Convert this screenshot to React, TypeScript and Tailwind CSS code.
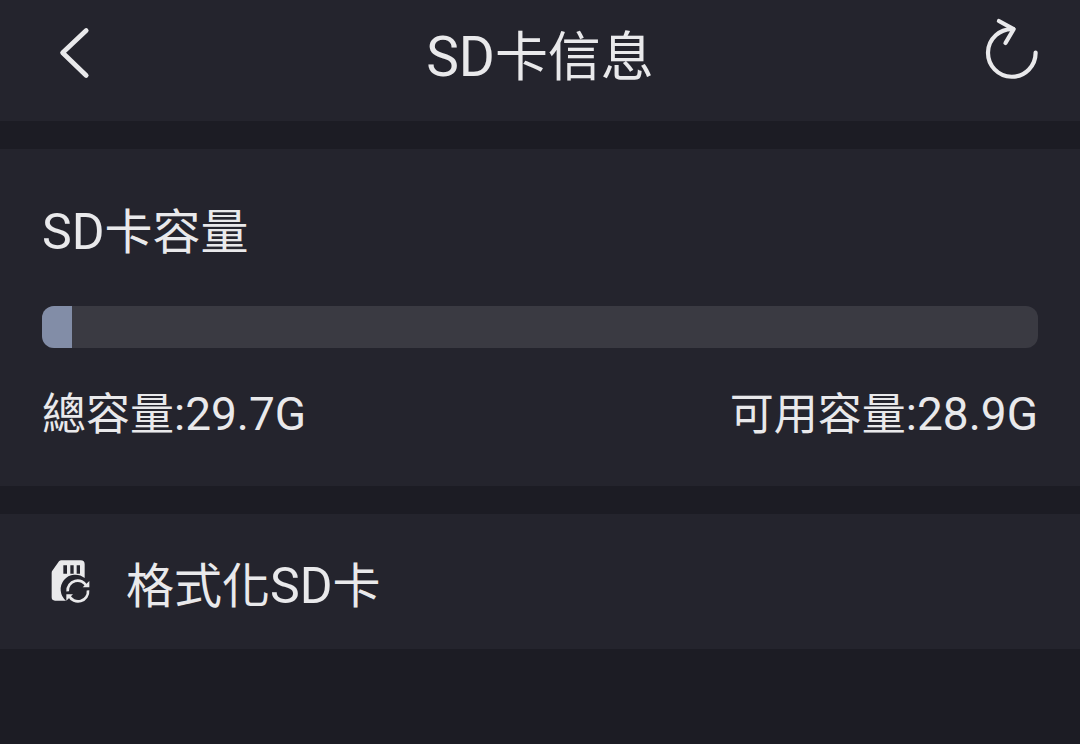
interface IconProps {
  className?: string
}

function BackIcon({ className }: IconProps) {
  return (
    <svg
      className={className}
      viewBox="0 0 36 56"
      fill="none"
      stroke="currentColor"
      strokeWidth="4.8"
      strokeLinecap="round"
      strokeLinejoin="round"
      aria-hidden="true"
    >
      <path d="M30.2 6.6 L6.6 28.7 L30.2 51.4" />
    </svg>
  )
}

function RefreshIcon({ className }: IconProps) {
  return (
    <svg
      className={className}
      viewBox="0 0 56 64"
      fill="none"
      stroke="currentColor"
      strokeWidth="4.2"
      strokeLinecap="round"
      strokeLinejoin="round"
      aria-hidden="true"
    >
      <path d="M51.6 36.5 A23.8 23.8 0 1 1 29.3 13.2" />
      <path d="M14.9 5 L29.6 13.2 L21.5 27" />
    </svg>
  )
}

function FormatCardIcon({ className }: IconProps) {
  return (
    <svg className={className} viewBox="0 0 126 138" fill="none" aria-hidden="true">
      {/* Card body, with a round bite for the arrows */}
      <path
        fill="currentColor"
        d="M34 7 H92 Q104 7 104 19 V60 A43 43 0 0 0 48 128 H15 Q5 128 5 118 V44 Q5 40 8 37 L27 10 Q30 7 34 7 Z"
      />
      <path fill="#24242d" d="M40 22 H51 V47 H40 Z M61 22 H71 V47 H61 Z M80 22 H90 V47 H80 Z" />
      {/* Two arrows chasing each other */}
      <g stroke="currentColor" strokeWidth="8">
        <path d="M53 100 A30 30 0 0 1 110 85" />
        <path d="M114 97 A30 30 0 0 1 57 113" />
      </g>
      <path fill="currentColor" d="M118 69 V88 H98 Z M49 128 V109 H69 Z" />
    </svg>
  )
}

const total = 29.7
const available = 28.9

export default function App() {
  const usedPercent = Math.round(((total - available) / total) * 100)

  return (
    <div className="min-h-screen bg-[#1c1c24] font-['Roboto','Noto_Sans_CJK_TC',sans-serif] text-[#e9e9eb]">
      <header className="flex items-start justify-between bg-[#24242d] px-10 pt-4 pb-[30px]">
        <button type="button" aria-label="返回" className="w-14 pt-2 pl-4">
          <BackIcon className="h-14 w-9" />
        </button>
        <h1 className="pt-[9px] text-[53px] leading-[65px]">
          <span className="text-[55px]">SD</span>卡信息
        </h1>
        <button type="button" aria-label="重新整理">
          <RefreshIcon className="h-16 w-14" />
        </button>
      </header>

      <main className="mt-7 flex flex-col gap-7">
        <section className="bg-[#24242d] px-[42px] pt-14 pb-[46px]">
          <h2 className="h-14 text-[48px] leading-[54px]">
            <span className="text-[50px]">SD</span>卡容量
          </h2>
          <div className="mt-[45px] h-[42px] overflow-hidden rounded-xl bg-[#3a3a42]">
            <div className="h-full bg-[#828da7]" style={{ width: `${usedPercent}%` }} />
          </div>
          <div className="mt-10 flex h-[52px] justify-between text-[44px] leading-[52px]">
            <span>
              總容量<span className="text-[46px]">:{total}G</span>
            </span>
            <span>
              可用容量<span className="text-[46px]">:{available}G</span>
            </span>
          </div>
        </section>

        <button type="button" className="flex w-full items-start bg-[#24242d] px-[50px] pt-11 pb-9 text-left">
          <FormatCardIcon className="h-[46px] w-[42px]" />
          <span className="ml-[34px] h-[55px] text-[48px] leading-[56px]">
            格式化<span className="text-[50px]">SD</span>卡
          </span>
        </button>
      </main>
    </div>
  )
}
